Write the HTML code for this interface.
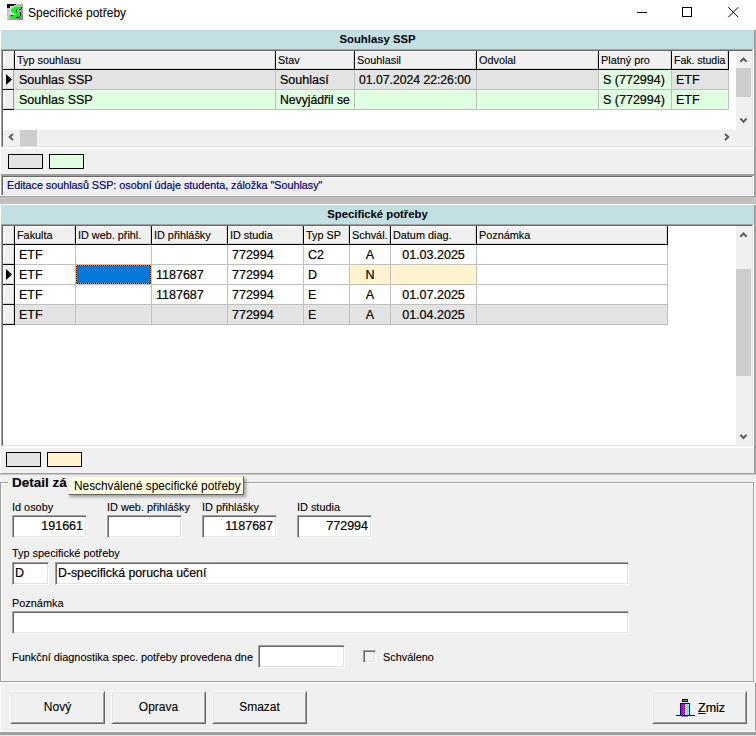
<!DOCTYPE html><html><head><meta charset="utf-8"><style>

html,body{margin:0;padding:0}
body{width:756px;height:736px;position:relative;overflow:hidden;background:#f0f0f0;font-family:"Liberation Sans", sans-serif;color:#000}
div{position:absolute;box-sizing:border-box}
.t{white-space:nowrap;line-height:1;-webkit-text-stroke:0.2px currentColor}
svg{position:absolute}
.edit{background:#fff;border:1px solid;border-color:#a0a0a0 #fff #fff #a0a0a0;box-shadow:inset 1px 1px #696969,inset -1px -1px #e3e3e3}
.btn{background:#f0f0f0;border:1px solid;border-color:#fff #696969 #696969 #fff;box-shadow:inset 1px 1px #e3e3e3,inset -1px -1px #a0a0a0}

</style></head><body>
<div style="left:0px;top:0px;width:756px;height:30px;background:#fff"></div>
<svg style="left:7px;top:4px" width="16" height="16" viewBox="0 0 16 16" shape-rendering="crispEdges"><defs><linearGradient id="ig" x1="0" y1="0" x2="1" y2="1"><stop offset="0" stop-color="#d4d4d4"/><stop offset="0.5" stop-color="#b0b0b0"/><stop offset="1" stop-color="#7c7c7c"/></linearGradient></defs><rect width="16" height="16" fill="url(#ig)"/><rect x="7" y="1" width="2" height="1" fill="#dcd0dc"/><rect x="3" y="2" width="4" height="1" fill="#dcd0dc"/><rect x="3" y="3" width="4" height="1" fill="#dcd0dc"/><rect x="3" y="4" width="2" height="1" fill="#dcd0dc"/><rect x="2" y="5" width="2" height="1" fill="#dcd0dc"/><rect x="2" y="6" width="2" height="1" fill="#dcd0dc"/><rect x="2" y="7" width="2" height="1" fill="#dcd0dc"/><rect x="1" y="8" width="5" height="1" fill="#dcd0dc"/><rect x="1" y="9" width="6" height="1" fill="#dcd0dc"/><rect x="1" y="10" width="8" height="1" fill="#dcd0dc"/><rect x="1" y="11" width="1" height="1" fill="#dcd0dc"/><rect x="0" y="12" width="2" height="1" fill="#dcd0dc"/><rect x="0" y="13" width="3" height="1" fill="#dcd0dc"/><rect x="0" y="14" width="2" height="1" fill="#dcd0dc"/><rect x="7" y="3" width="7" height="1" fill="#00ff00"/><rect x="5" y="4" width="9" height="1" fill="#00ff00"/><rect x="4" y="5" width="6" height="1" fill="#00ff00"/><rect x="4" y="6" width="5" height="1" fill="#00ff00"/><rect x="4" y="7" width="5" height="1" fill="#00ff00"/><rect x="6" y="8" width="7" height="1" fill="#00ff00"/><rect x="7" y="9" width="6" height="1" fill="#00ff00"/><rect x="9" y="10" width="4" height="1" fill="#00ff00"/><rect x="2" y="11" width="2" height="1" fill="#00ff00"/><rect x="6" y="11" width="7" height="1" fill="#00ff00"/><rect x="2" y="12" width="10" height="1" fill="#00ff00"/><rect x="3" y="13" width="6" height="1" fill="#00ff00"/><rect x="0" y="0" width="9" height="1" fill="#000"/><rect x="0" y="1" width="7" height="1" fill="#000"/><rect x="0" y="2" width="3" height="1" fill="#000"/><rect x="0" y="3" width="3" height="1" fill="#000"/><rect x="14" y="3" width="1" height="1" fill="#000"/><rect x="14" y="4" width="1" height="1" fill="#000"/><rect x="10" y="5" width="1" height="1" fill="#000"/><rect x="12" y="5" width="2" height="1" fill="#000"/><rect x="9" y="6" width="1" height="1" fill="#000"/><rect x="9" y="7" width="1" height="1" fill="#000"/><rect x="13" y="8" width="1" height="1" fill="#000"/><rect x="13" y="9" width="1" height="1" fill="#000"/><rect x="13" y="10" width="1" height="1" fill="#000"/><rect x="4" y="11" width="2" height="1" fill="#000"/><rect x="13" y="11" width="1" height="1" fill="#000"/><rect x="12" y="12" width="1" height="1" fill="#000"/><rect x="9" y="13" width="3" height="1" fill="#000"/></svg>
<div class="t" style="left:28px;top:7px;font-size:12px;-webkit-text-stroke:0.05px">Specifické potřeby</div>
<div style="left:637px;top:12px;width:10px;height:1px;background:#000"></div>
<div style="left:682px;top:7px;width:10px;height:10px;border:1px solid #000"></div>
<svg style="left:727px;top:6px" width="13" height="13" viewBox="0 0 13 13"><path d="M1.3 1.3L11.2 11.2M11.2 1.3L1.3 11.2" stroke="#000" stroke-width="1"/></svg>
<div style="left:0px;top:30px;width:1px;height:444px;background:#fff"></div>
<div style="left:754px;top:30px;width:2px;height:444px;background:#a0a0a0"></div>
<div style="left:1px;top:30px;width:753px;height:19px;background:#c2dfe1"></div>
<div class="t" style="left:0px;top:34px;width:755px;text-align:center;font-size:11.3px;font-weight:bold;-webkit-text-stroke:0">Souhlasy SSP</div>
<div style="left:3px;top:51px;width:749px;height:95px;background:#fff"></div>
<div style="left:1px;top:49px;width:753px;height:1px;background:#a0a0a0"></div>
<div style="left:1px;top:49px;width:1px;height:99px;background:#a0a0a0"></div>
<div style="left:1px;top:147px;width:753px;height:1px;background:#fff"></div>
<div style="left:753px;top:49px;width:1px;height:99px;background:#fff"></div>
<div style="left:2px;top:50px;width:751px;height:1px;background:#696969"></div>
<div style="left:2px;top:50px;width:1px;height:97px;background:#696969"></div>
<div style="left:2px;top:146px;width:751px;height:1px;background:#e3e3e3"></div>
<div style="left:752px;top:50px;width:1px;height:97px;background:#e3e3e3"></div>
<div style="left:3px;top:51px;width:11px;height:18px;background:#f0f0f0"></div>
<div style="left:3px;top:68px;width:11px;height:1px;background:#d8d8d8"></div>
<div style="left:13px;top:51px;width:1px;height:18px;background:#d8d8d8"></div>
<div style="left:3px;top:51px;width:10px;height:1px;background:#fff"></div>
<div style="left:3px;top:51px;width:1px;height:17px;background:#fff"></div>
<div style="left:14px;top:51px;width:1px;height:19px;background:#000"></div>
<div style="left:15px;top:51px;width:260px;height:18px;background:#f0f0f0"></div>
<div style="left:15px;top:68px;width:260px;height:1px;background:#d8d8d8"></div>
<div style="left:274px;top:51px;width:1px;height:18px;background:#d8d8d8"></div>
<div style="left:15px;top:51px;width:259px;height:1px;background:#fff"></div>
<div style="left:15px;top:51px;width:1px;height:17px;background:#fff"></div>
<div style="left:275px;top:51px;width:1px;height:19px;background:#000"></div>
<div class="t" style="left:17px;top:55px;font-size:10.85px;-webkit-text-stroke:0.12px">Typ souhlasu</div>
<div style="left:276px;top:51px;width:78px;height:18px;background:#f0f0f0"></div>
<div style="left:276px;top:68px;width:78px;height:1px;background:#d8d8d8"></div>
<div style="left:353px;top:51px;width:1px;height:18px;background:#d8d8d8"></div>
<div style="left:276px;top:51px;width:77px;height:1px;background:#fff"></div>
<div style="left:276px;top:51px;width:1px;height:17px;background:#fff"></div>
<div style="left:354px;top:51px;width:1px;height:19px;background:#000"></div>
<div class="t" style="left:278px;top:55px;font-size:10.85px;-webkit-text-stroke:0.12px">Stav</div>
<div style="left:355px;top:51px;width:121px;height:18px;background:#f0f0f0"></div>
<div style="left:355px;top:68px;width:121px;height:1px;background:#d8d8d8"></div>
<div style="left:475px;top:51px;width:1px;height:18px;background:#d8d8d8"></div>
<div style="left:355px;top:51px;width:120px;height:1px;background:#fff"></div>
<div style="left:355px;top:51px;width:1px;height:17px;background:#fff"></div>
<div style="left:476px;top:51px;width:1px;height:19px;background:#000"></div>
<div class="t" style="left:357px;top:55px;font-size:10.85px;-webkit-text-stroke:0.12px">Souhlasil</div>
<div style="left:477px;top:51px;width:121px;height:18px;background:#f0f0f0"></div>
<div style="left:477px;top:68px;width:121px;height:1px;background:#d8d8d8"></div>
<div style="left:597px;top:51px;width:1px;height:18px;background:#d8d8d8"></div>
<div style="left:477px;top:51px;width:120px;height:1px;background:#fff"></div>
<div style="left:477px;top:51px;width:1px;height:17px;background:#fff"></div>
<div style="left:598px;top:51px;width:1px;height:19px;background:#000"></div>
<div class="t" style="left:479px;top:55px;font-size:10.85px;-webkit-text-stroke:0.12px">Odvolal</div>
<div style="left:599px;top:51px;width:72px;height:18px;background:#f0f0f0"></div>
<div style="left:599px;top:68px;width:72px;height:1px;background:#d8d8d8"></div>
<div style="left:670px;top:51px;width:1px;height:18px;background:#d8d8d8"></div>
<div style="left:599px;top:51px;width:71px;height:1px;background:#fff"></div>
<div style="left:599px;top:51px;width:1px;height:17px;background:#fff"></div>
<div style="left:671px;top:51px;width:1px;height:19px;background:#000"></div>
<div class="t" style="left:601px;top:55px;font-size:10.85px;-webkit-text-stroke:0.12px">Platný pro</div>
<div style="left:672px;top:51px;width:56px;height:18px;background:#f0f0f0"></div>
<div style="left:672px;top:68px;width:56px;height:1px;background:#d8d8d8"></div>
<div style="left:727px;top:51px;width:1px;height:18px;background:#d8d8d8"></div>
<div style="left:672px;top:51px;width:55px;height:1px;background:#fff"></div>
<div style="left:672px;top:51px;width:1px;height:17px;background:#fff"></div>
<div style="left:728px;top:51px;width:1px;height:19px;background:#000"></div>
<div class="t" style="left:674px;top:55px;font-size:10.5px;-webkit-text-stroke:0.12px">Fak. studia</div>
<div style="left:3px;top:69px;width:726px;height:1px;background:#000"></div>
<div style="left:3px;top:70px;width:11px;height:19px;background:#f0f0f0"></div>
<div style="left:3px;top:88px;width:11px;height:1px;background:#d8d8d8"></div>
<div style="left:13px;top:70px;width:1px;height:19px;background:#d8d8d8"></div>
<div style="left:3px;top:70px;width:10px;height:1px;background:#fff"></div>
<div style="left:3px;top:70px;width:1px;height:18px;background:#fff"></div>
<div style="left:3px;top:89px;width:11px;height:1px;background:#000"></div>
<div style="left:13px;top:70px;width:1px;height:19px;background:#a0a0a0"></div>
<div style="left:14px;top:70px;width:1px;height:20px;background:#e3e3e3"></div>
<svg style="left:6px;top:74px" width="7" height="11" viewBox="0 0 7 11"><path d="M0 0L6 5.5L0 11Z" fill="#000"/></svg>
<div style="left:15px;top:70px;width:260px;height:19px;background:#e3e3e3"></div>
<div style="left:275px;top:70px;width:1px;height:20px;background:#c0c0c0"></div>
<div style="left:15px;top:89px;width:260px;height:1px;background:#c0c0c0"></div>
<div class="t" style="left:19px;top:74px;font-size:12.5px">Souhlas SSP</div>
<div style="left:276px;top:70px;width:78px;height:19px;background:#e3e3e3"></div>
<div style="left:354px;top:70px;width:1px;height:20px;background:#c0c0c0"></div>
<div style="left:276px;top:89px;width:78px;height:1px;background:#c0c0c0"></div>
<div class="t" style="left:280px;top:74px;font-size:12.5px">Souhlasí</div>
<div style="left:355px;top:70px;width:121px;height:19px;background:#e3e3e3"></div>
<div style="left:476px;top:70px;width:1px;height:20px;background:#c0c0c0"></div>
<div style="left:355px;top:89px;width:121px;height:1px;background:#c0c0c0"></div>
<div class="t" style="left:359px;top:74px;font-size:12.2px">01.07.2024 22:26:00</div>
<div style="left:477px;top:70px;width:121px;height:19px;background:#e3e3e3"></div>
<div style="left:598px;top:70px;width:1px;height:20px;background:#c0c0c0"></div>
<div style="left:477px;top:89px;width:121px;height:1px;background:#c0c0c0"></div>
<div style="left:599px;top:70px;width:72px;height:19px;background:#e0ffe0"></div>
<div style="left:671px;top:70px;width:1px;height:20px;background:#c0c0c0"></div>
<div style="left:599px;top:89px;width:72px;height:1px;background:#c0c0c0"></div>
<div class="t" style="left:603px;top:74px;font-size:12.5px">S (772994)</div>
<div style="left:672px;top:70px;width:56px;height:19px;background:#e3e3e3"></div>
<div style="left:728px;top:70px;width:1px;height:20px;background:#c0c0c0"></div>
<div style="left:672px;top:89px;width:56px;height:1px;background:#c0c0c0"></div>
<div class="t" style="left:676px;top:74px;font-size:12.5px">ETF</div>
<div style="left:3px;top:90px;width:11px;height:19px;background:#f0f0f0"></div>
<div style="left:3px;top:108px;width:11px;height:1px;background:#d8d8d8"></div>
<div style="left:13px;top:90px;width:1px;height:19px;background:#d8d8d8"></div>
<div style="left:3px;top:90px;width:10px;height:1px;background:#fff"></div>
<div style="left:3px;top:90px;width:1px;height:18px;background:#fff"></div>
<div style="left:3px;top:109px;width:11px;height:1px;background:#000"></div>
<div style="left:13px;top:90px;width:1px;height:19px;background:#a0a0a0"></div>
<div style="left:14px;top:90px;width:1px;height:20px;background:#e3e3e3"></div>
<div style="left:15px;top:90px;width:260px;height:19px;background:#e0ffe0"></div>
<div style="left:275px;top:90px;width:1px;height:20px;background:#c0c0c0"></div>
<div style="left:15px;top:109px;width:260px;height:1px;background:#c0c0c0"></div>
<div class="t" style="left:19px;top:94px;font-size:12.5px">Souhlas SSP</div>
<div style="left:276px;top:90px;width:78px;height:19px;background:#e0ffe0"></div>
<div style="left:354px;top:90px;width:1px;height:20px;background:#c0c0c0"></div>
<div style="left:276px;top:109px;width:78px;height:1px;background:#c0c0c0"></div>
<div class="t" style="left:280px;top:94px;font-size:12.2px">Nevyjádřil se</div>
<div style="left:355px;top:90px;width:121px;height:19px;background:#e0ffe0"></div>
<div style="left:476px;top:90px;width:1px;height:20px;background:#c0c0c0"></div>
<div style="left:355px;top:109px;width:121px;height:1px;background:#c0c0c0"></div>
<div style="left:477px;top:90px;width:121px;height:19px;background:#e0ffe0"></div>
<div style="left:598px;top:90px;width:1px;height:20px;background:#c0c0c0"></div>
<div style="left:477px;top:109px;width:121px;height:1px;background:#c0c0c0"></div>
<div style="left:599px;top:90px;width:72px;height:19px;background:#e0ffe0"></div>
<div style="left:671px;top:90px;width:1px;height:20px;background:#c0c0c0"></div>
<div style="left:599px;top:109px;width:72px;height:1px;background:#c0c0c0"></div>
<div class="t" style="left:603px;top:94px;font-size:12.5px">S (772994)</div>
<div style="left:672px;top:90px;width:56px;height:19px;background:#e0ffe0"></div>
<div style="left:728px;top:90px;width:1px;height:20px;background:#c0c0c0"></div>
<div style="left:672px;top:109px;width:56px;height:1px;background:#c0c0c0"></div>
<div class="t" style="left:676px;top:94px;font-size:12.5px">ETF</div>
<div style="left:736px;top:51px;width:16px;height:79px;background:#f0f0f0"></div>
<div style="left:736px;top:68px;width:15px;height:29px;background:#cdcdcd"></div>
<div style="left:3px;top:130px;width:749px;height:16px;background:#f0f0f0"></div>
<div style="left:20px;top:130px;width:17px;height:16px;background:#cdcdcd"></div>
<div style="left:1px;top:148px;width:752px;height:1px;background:#fff"></div>
<div style="left:8px;top:154px;width:35px;height:15px;background:#e3e3e3;border:1px solid #000"></div>
<div style="left:49px;top:154px;width:35px;height:15px;background:#e0ffe0;border:1px solid #000"></div>
<div style="left:1px;top:174px;width:755px;height:2px;background:#a0a0a0"></div>
<div style="left:2px;top:176px;width:751px;height:1px;background:#696969"></div>
<div style="left:1px;top:176px;width:1px;height:20px;background:#a0a0a0"></div>
<div style="left:2px;top:176px;width:1px;height:19px;background:#696969"></div>
<div style="left:3px;top:177px;width:749px;height:1px;background:#fff"></div>
<div style="left:3px;top:177px;width:1px;height:17px;background:#fff"></div>
<div style="left:3px;top:194px;width:750px;height:1px;background:#e3e3e3"></div>
<div style="left:752px;top:176px;width:1px;height:19px;background:#e3e3e3"></div>
<div style="left:1px;top:195px;width:753px;height:1px;background:#fff"></div>
<div style="left:753px;top:176px;width:1px;height:20px;background:#fff"></div>
<div class="t" style="left:7px;top:180px;font-size:10.75px;color:#000080">Editace souhlasů SSP: osobní údaje studenta, záložka "Souhlasy"</div>
<div style="left:0px;top:196px;width:756px;height:1px;background:#a0a0a0"></div>
<div style="left:0px;top:197px;width:756px;height:7px;background:#c0c0c0"></div>
<div style="left:0px;top:204px;width:756px;height:1px;background:#fff"></div>
<div style="left:1px;top:205px;width:753px;height:19px;background:#c2dfe1"></div>
<div class="t" style="left:0px;top:209px;width:755px;text-align:center;font-size:11.3px;font-weight:bold;-webkit-text-stroke:0">Specifické potřeby</div>
<div style="left:3px;top:226px;width:749px;height:219px;background:#fff"></div>
<div style="left:1px;top:224px;width:753px;height:1px;background:#a0a0a0"></div>
<div style="left:1px;top:224px;width:1px;height:223px;background:#a0a0a0"></div>
<div style="left:1px;top:446px;width:753px;height:1px;background:#fff"></div>
<div style="left:753px;top:224px;width:1px;height:223px;background:#fff"></div>
<div style="left:2px;top:225px;width:751px;height:1px;background:#696969"></div>
<div style="left:2px;top:225px;width:1px;height:221px;background:#696969"></div>
<div style="left:2px;top:445px;width:751px;height:1px;background:#e3e3e3"></div>
<div style="left:752px;top:225px;width:1px;height:221px;background:#e3e3e3"></div>
<div style="left:3px;top:226px;width:11px;height:18px;background:#f0f0f0"></div>
<div style="left:3px;top:243px;width:11px;height:1px;background:#d8d8d8"></div>
<div style="left:13px;top:226px;width:1px;height:18px;background:#d8d8d8"></div>
<div style="left:3px;top:226px;width:10px;height:1px;background:#fff"></div>
<div style="left:3px;top:226px;width:1px;height:17px;background:#fff"></div>
<div style="left:14px;top:226px;width:1px;height:19px;background:#000"></div>
<div style="left:15px;top:226px;width:60px;height:18px;background:#f0f0f0"></div>
<div style="left:15px;top:243px;width:60px;height:1px;background:#d8d8d8"></div>
<div style="left:74px;top:226px;width:1px;height:18px;background:#d8d8d8"></div>
<div style="left:15px;top:226px;width:59px;height:1px;background:#fff"></div>
<div style="left:15px;top:226px;width:1px;height:17px;background:#fff"></div>
<div style="left:75px;top:226px;width:1px;height:19px;background:#000"></div>
<div class="t" style="left:17px;top:230px;font-size:10.85px;-webkit-text-stroke:0.12px">Fakulta</div>
<div style="left:76px;top:226px;width:75px;height:18px;background:#f0f0f0"></div>
<div style="left:76px;top:243px;width:75px;height:1px;background:#d8d8d8"></div>
<div style="left:150px;top:226px;width:1px;height:18px;background:#d8d8d8"></div>
<div style="left:76px;top:226px;width:74px;height:1px;background:#fff"></div>
<div style="left:76px;top:226px;width:1px;height:17px;background:#fff"></div>
<div style="left:151px;top:226px;width:1px;height:19px;background:#000"></div>
<div class="t" style="left:78px;top:230px;font-size:10.85px;-webkit-text-stroke:0.12px">ID web. přihl.</div>
<div style="left:152px;top:226px;width:75px;height:18px;background:#f0f0f0"></div>
<div style="left:152px;top:243px;width:75px;height:1px;background:#d8d8d8"></div>
<div style="left:226px;top:226px;width:1px;height:18px;background:#d8d8d8"></div>
<div style="left:152px;top:226px;width:74px;height:1px;background:#fff"></div>
<div style="left:152px;top:226px;width:1px;height:17px;background:#fff"></div>
<div style="left:227px;top:226px;width:1px;height:19px;background:#000"></div>
<div class="t" style="left:154px;top:230px;font-size:10.85px;-webkit-text-stroke:0.12px">ID přihlášky</div>
<div style="left:228px;top:226px;width:75px;height:18px;background:#f0f0f0"></div>
<div style="left:228px;top:243px;width:75px;height:1px;background:#d8d8d8"></div>
<div style="left:302px;top:226px;width:1px;height:18px;background:#d8d8d8"></div>
<div style="left:228px;top:226px;width:74px;height:1px;background:#fff"></div>
<div style="left:228px;top:226px;width:1px;height:17px;background:#fff"></div>
<div style="left:303px;top:226px;width:1px;height:19px;background:#000"></div>
<div class="t" style="left:230px;top:230px;font-size:10.85px;-webkit-text-stroke:0.12px">ID studia</div>
<div style="left:304px;top:226px;width:45px;height:18px;background:#f0f0f0"></div>
<div style="left:304px;top:243px;width:45px;height:1px;background:#d8d8d8"></div>
<div style="left:348px;top:226px;width:1px;height:18px;background:#d8d8d8"></div>
<div style="left:304px;top:226px;width:44px;height:1px;background:#fff"></div>
<div style="left:304px;top:226px;width:1px;height:17px;background:#fff"></div>
<div style="left:349px;top:226px;width:1px;height:19px;background:#000"></div>
<div class="t" style="left:306px;top:230px;font-size:10.85px;-webkit-text-stroke:0.12px">Typ SP</div>
<div style="left:350px;top:226px;width:40px;height:18px;background:#f0f0f0"></div>
<div style="left:350px;top:243px;width:40px;height:1px;background:#d8d8d8"></div>
<div style="left:389px;top:226px;width:1px;height:18px;background:#d8d8d8"></div>
<div style="left:350px;top:226px;width:39px;height:1px;background:#fff"></div>
<div style="left:350px;top:226px;width:1px;height:17px;background:#fff"></div>
<div style="left:390px;top:226px;width:1px;height:19px;background:#000"></div>
<div class="t" style="left:352px;top:230px;font-size:10.85px;-webkit-text-stroke:0.12px">Schvál.</div>
<div style="left:391px;top:226px;width:85px;height:18px;background:#f0f0f0"></div>
<div style="left:391px;top:243px;width:85px;height:1px;background:#d8d8d8"></div>
<div style="left:475px;top:226px;width:1px;height:18px;background:#d8d8d8"></div>
<div style="left:391px;top:226px;width:84px;height:1px;background:#fff"></div>
<div style="left:391px;top:226px;width:1px;height:17px;background:#fff"></div>
<div style="left:476px;top:226px;width:1px;height:19px;background:#000"></div>
<div class="t" style="left:393px;top:230px;font-size:10.85px;-webkit-text-stroke:0.12px">Datum diag.</div>
<div style="left:477px;top:226px;width:190px;height:18px;background:#f0f0f0"></div>
<div style="left:477px;top:243px;width:190px;height:1px;background:#d8d8d8"></div>
<div style="left:666px;top:226px;width:1px;height:18px;background:#d8d8d8"></div>
<div style="left:477px;top:226px;width:189px;height:1px;background:#fff"></div>
<div style="left:477px;top:226px;width:1px;height:17px;background:#fff"></div>
<div style="left:667px;top:226px;width:1px;height:19px;background:#000"></div>
<div class="t" style="left:479px;top:230px;font-size:10.85px;-webkit-text-stroke:0.12px">Poznámka</div>
<div style="left:3px;top:244px;width:665px;height:1px;background:#000"></div>
<div style="left:3px;top:245px;width:11px;height:19px;background:#f0f0f0"></div>
<div style="left:3px;top:263px;width:11px;height:1px;background:#d8d8d8"></div>
<div style="left:13px;top:245px;width:1px;height:19px;background:#d8d8d8"></div>
<div style="left:3px;top:245px;width:10px;height:1px;background:#fff"></div>
<div style="left:3px;top:245px;width:1px;height:18px;background:#fff"></div>
<div style="left:3px;top:264px;width:11px;height:1px;background:#000"></div>
<div style="left:14px;top:245px;width:1px;height:20px;background:#000"></div>
<div style="left:15px;top:245px;width:60px;height:19px;background:#fff"></div>
<div style="left:75px;top:245px;width:1px;height:20px;background:#c0c0c0"></div>
<div style="left:15px;top:264px;width:60px;height:1px;background:#c0c0c0"></div>
<div class="t" style="left:19px;top:249px;font-size:12.5px">ETF</div>
<div style="left:76px;top:245px;width:75px;height:19px;background:#fff"></div>
<div style="left:151px;top:245px;width:1px;height:20px;background:#c0c0c0"></div>
<div style="left:76px;top:264px;width:75px;height:1px;background:#c0c0c0"></div>
<div style="left:152px;top:245px;width:75px;height:19px;background:#fff"></div>
<div style="left:227px;top:245px;width:1px;height:20px;background:#c0c0c0"></div>
<div style="left:152px;top:264px;width:75px;height:1px;background:#c0c0c0"></div>
<div style="left:228px;top:245px;width:75px;height:19px;background:#fff"></div>
<div style="left:303px;top:245px;width:1px;height:20px;background:#c0c0c0"></div>
<div style="left:228px;top:264px;width:75px;height:1px;background:#c0c0c0"></div>
<div class="t" style="left:232px;top:249px;font-size:12.5px">772994</div>
<div style="left:304px;top:245px;width:45px;height:19px;background:#fff"></div>
<div style="left:349px;top:245px;width:1px;height:20px;background:#c0c0c0"></div>
<div style="left:304px;top:264px;width:45px;height:1px;background:#c0c0c0"></div>
<div class="t" style="left:308px;top:249px;font-size:12.5px">C2</div>
<div style="left:350px;top:245px;width:40px;height:19px;background:#fff"></div>
<div style="left:390px;top:245px;width:1px;height:20px;background:#c0c0c0"></div>
<div style="left:350px;top:264px;width:40px;height:1px;background:#c0c0c0"></div>
<div class="t" style="left:350px;top:249px;font-size:12.5px;width:40px;text-align:center">A</div>
<div style="left:391px;top:245px;width:85px;height:19px;background:#fff"></div>
<div style="left:476px;top:245px;width:1px;height:20px;background:#c0c0c0"></div>
<div style="left:391px;top:264px;width:85px;height:1px;background:#c0c0c0"></div>
<div class="t" style="left:391px;top:249px;font-size:12.5px;width:85px;text-align:center">01.03.2025</div>
<div style="left:477px;top:245px;width:190px;height:19px;background:#fff"></div>
<div style="left:667px;top:245px;width:1px;height:20px;background:#c0c0c0"></div>
<div style="left:477px;top:264px;width:190px;height:1px;background:#c0c0c0"></div>
<div style="left:3px;top:265px;width:11px;height:19px;background:#f0f0f0"></div>
<div style="left:3px;top:283px;width:11px;height:1px;background:#d8d8d8"></div>
<div style="left:13px;top:265px;width:1px;height:19px;background:#d8d8d8"></div>
<div style="left:3px;top:265px;width:10px;height:1px;background:#fff"></div>
<div style="left:3px;top:265px;width:1px;height:18px;background:#fff"></div>
<div style="left:3px;top:284px;width:11px;height:1px;background:#000"></div>
<div style="left:14px;top:265px;width:1px;height:20px;background:#000"></div>
<svg style="left:6px;top:269px" width="7" height="11" viewBox="0 0 7 11"><path d="M0 0L6 5.5L0 11Z" fill="#000"/></svg>
<div style="left:15px;top:265px;width:60px;height:19px;background:#fff"></div>
<div style="left:75px;top:265px;width:1px;height:20px;background:#c0c0c0"></div>
<div style="left:15px;top:284px;width:60px;height:1px;background:#c0c0c0"></div>
<div class="t" style="left:19px;top:269px;font-size:12.5px">ETF</div>
<div style="left:76px;top:265px;width:75px;height:19px;background:#fff"></div>
<div style="left:151px;top:265px;width:1px;height:20px;background:#c0c0c0"></div>
<div style="left:76px;top:284px;width:75px;height:1px;background:#c0c0c0"></div>
<div style="left:76px;top:265px;width:75px;height:19px;background:#0078d7;box-shadow:inset 0 0 0 1px #000;outline:1px dotted #ff8c28;outline-offset:-1px"></div>
<div style="left:152px;top:265px;width:75px;height:19px;background:#fff"></div>
<div style="left:227px;top:265px;width:1px;height:20px;background:#c0c0c0"></div>
<div style="left:152px;top:284px;width:75px;height:1px;background:#c0c0c0"></div>
<div class="t" style="left:156px;top:269px;font-size:12.5px">1187687</div>
<div style="left:228px;top:265px;width:75px;height:19px;background:#fff"></div>
<div style="left:303px;top:265px;width:1px;height:20px;background:#c0c0c0"></div>
<div style="left:228px;top:284px;width:75px;height:1px;background:#c0c0c0"></div>
<div class="t" style="left:232px;top:269px;font-size:12.5px">772994</div>
<div style="left:304px;top:265px;width:45px;height:19px;background:#fff"></div>
<div style="left:349px;top:265px;width:1px;height:20px;background:#c0c0c0"></div>
<div style="left:304px;top:284px;width:45px;height:1px;background:#c0c0c0"></div>
<div class="t" style="left:308px;top:269px;font-size:12.5px">D</div>
<div style="left:350px;top:265px;width:40px;height:19px;background:#fff3d0"></div>
<div style="left:390px;top:265px;width:1px;height:20px;background:#c0c0c0"></div>
<div style="left:350px;top:284px;width:40px;height:1px;background:#c0c0c0"></div>
<div class="t" style="left:350px;top:269px;font-size:12.5px;width:40px;text-align:center">N</div>
<div style="left:391px;top:265px;width:85px;height:19px;background:#fff3d0"></div>
<div style="left:476px;top:265px;width:1px;height:20px;background:#c0c0c0"></div>
<div style="left:391px;top:284px;width:85px;height:1px;background:#c0c0c0"></div>
<div style="left:477px;top:265px;width:190px;height:19px;background:#fff"></div>
<div style="left:667px;top:265px;width:1px;height:20px;background:#c0c0c0"></div>
<div style="left:477px;top:284px;width:190px;height:1px;background:#c0c0c0"></div>
<div style="left:3px;top:285px;width:11px;height:19px;background:#f0f0f0"></div>
<div style="left:3px;top:303px;width:11px;height:1px;background:#d8d8d8"></div>
<div style="left:13px;top:285px;width:1px;height:19px;background:#d8d8d8"></div>
<div style="left:3px;top:285px;width:10px;height:1px;background:#fff"></div>
<div style="left:3px;top:285px;width:1px;height:18px;background:#fff"></div>
<div style="left:3px;top:304px;width:11px;height:1px;background:#000"></div>
<div style="left:14px;top:285px;width:1px;height:20px;background:#000"></div>
<div style="left:15px;top:285px;width:60px;height:19px;background:#fff"></div>
<div style="left:75px;top:285px;width:1px;height:20px;background:#c0c0c0"></div>
<div style="left:15px;top:304px;width:60px;height:1px;background:#c0c0c0"></div>
<div class="t" style="left:19px;top:289px;font-size:12.5px">ETF</div>
<div style="left:76px;top:285px;width:75px;height:19px;background:#fff"></div>
<div style="left:151px;top:285px;width:1px;height:20px;background:#c0c0c0"></div>
<div style="left:76px;top:304px;width:75px;height:1px;background:#c0c0c0"></div>
<div style="left:152px;top:285px;width:75px;height:19px;background:#fff"></div>
<div style="left:227px;top:285px;width:1px;height:20px;background:#c0c0c0"></div>
<div style="left:152px;top:304px;width:75px;height:1px;background:#c0c0c0"></div>
<div class="t" style="left:156px;top:289px;font-size:12.5px">1187687</div>
<div style="left:228px;top:285px;width:75px;height:19px;background:#fff"></div>
<div style="left:303px;top:285px;width:1px;height:20px;background:#c0c0c0"></div>
<div style="left:228px;top:304px;width:75px;height:1px;background:#c0c0c0"></div>
<div class="t" style="left:232px;top:289px;font-size:12.5px">772994</div>
<div style="left:304px;top:285px;width:45px;height:19px;background:#fff"></div>
<div style="left:349px;top:285px;width:1px;height:20px;background:#c0c0c0"></div>
<div style="left:304px;top:304px;width:45px;height:1px;background:#c0c0c0"></div>
<div class="t" style="left:308px;top:289px;font-size:12.5px">E</div>
<div style="left:350px;top:285px;width:40px;height:19px;background:#fff"></div>
<div style="left:390px;top:285px;width:1px;height:20px;background:#c0c0c0"></div>
<div style="left:350px;top:304px;width:40px;height:1px;background:#c0c0c0"></div>
<div class="t" style="left:350px;top:289px;font-size:12.5px;width:40px;text-align:center">A</div>
<div style="left:391px;top:285px;width:85px;height:19px;background:#fff"></div>
<div style="left:476px;top:285px;width:1px;height:20px;background:#c0c0c0"></div>
<div style="left:391px;top:304px;width:85px;height:1px;background:#c0c0c0"></div>
<div class="t" style="left:391px;top:289px;font-size:12.5px;width:85px;text-align:center">01.07.2025</div>
<div style="left:477px;top:285px;width:190px;height:19px;background:#fff"></div>
<div style="left:667px;top:285px;width:1px;height:20px;background:#c0c0c0"></div>
<div style="left:477px;top:304px;width:190px;height:1px;background:#c0c0c0"></div>
<div style="left:3px;top:305px;width:11px;height:19px;background:#f0f0f0"></div>
<div style="left:3px;top:323px;width:11px;height:1px;background:#d8d8d8"></div>
<div style="left:13px;top:305px;width:1px;height:19px;background:#d8d8d8"></div>
<div style="left:3px;top:305px;width:10px;height:1px;background:#fff"></div>
<div style="left:3px;top:305px;width:1px;height:18px;background:#fff"></div>
<div style="left:3px;top:324px;width:11px;height:1px;background:#000"></div>
<div style="left:14px;top:305px;width:1px;height:20px;background:#000"></div>
<div style="left:15px;top:305px;width:60px;height:19px;background:#e3e3e3"></div>
<div style="left:75px;top:305px;width:1px;height:20px;background:#c0c0c0"></div>
<div style="left:15px;top:324px;width:60px;height:1px;background:#c0c0c0"></div>
<div class="t" style="left:19px;top:309px;font-size:12.5px">ETF</div>
<div style="left:76px;top:305px;width:75px;height:19px;background:#e3e3e3"></div>
<div style="left:151px;top:305px;width:1px;height:20px;background:#c0c0c0"></div>
<div style="left:76px;top:324px;width:75px;height:1px;background:#c0c0c0"></div>
<div style="left:152px;top:305px;width:75px;height:19px;background:#e3e3e3"></div>
<div style="left:227px;top:305px;width:1px;height:20px;background:#c0c0c0"></div>
<div style="left:152px;top:324px;width:75px;height:1px;background:#c0c0c0"></div>
<div style="left:228px;top:305px;width:75px;height:19px;background:#e3e3e3"></div>
<div style="left:303px;top:305px;width:1px;height:20px;background:#c0c0c0"></div>
<div style="left:228px;top:324px;width:75px;height:1px;background:#c0c0c0"></div>
<div class="t" style="left:232px;top:309px;font-size:12.5px">772994</div>
<div style="left:304px;top:305px;width:45px;height:19px;background:#e3e3e3"></div>
<div style="left:349px;top:305px;width:1px;height:20px;background:#c0c0c0"></div>
<div style="left:304px;top:324px;width:45px;height:1px;background:#c0c0c0"></div>
<div class="t" style="left:308px;top:309px;font-size:12.5px">E</div>
<div style="left:350px;top:305px;width:40px;height:19px;background:#e3e3e3"></div>
<div style="left:390px;top:305px;width:1px;height:20px;background:#c0c0c0"></div>
<div style="left:350px;top:324px;width:40px;height:1px;background:#c0c0c0"></div>
<div class="t" style="left:350px;top:309px;font-size:12.5px;width:40px;text-align:center">A</div>
<div style="left:391px;top:305px;width:85px;height:19px;background:#e3e3e3"></div>
<div style="left:476px;top:305px;width:1px;height:20px;background:#c0c0c0"></div>
<div style="left:391px;top:324px;width:85px;height:1px;background:#c0c0c0"></div>
<div class="t" style="left:391px;top:309px;font-size:12.5px;width:85px;text-align:center">01.04.2025</div>
<div style="left:477px;top:305px;width:190px;height:19px;background:#e3e3e3"></div>
<div style="left:667px;top:305px;width:1px;height:20px;background:#c0c0c0"></div>
<div style="left:477px;top:324px;width:190px;height:1px;background:#c0c0c0"></div>
<div style="left:736px;top:226px;width:16px;height:219px;background:#f0f0f0"></div>
<div style="left:736px;top:269px;width:15px;height:107px;background:#cdcdcd"></div>
<div style="left:1px;top:447px;width:752px;height:1px;background:#fff"></div>
<div style="left:6px;top:452px;width:35px;height:15px;background:#e3e3e3;border:1px solid #000"></div>
<div style="left:47px;top:452px;width:35px;height:15px;background:#fff3d0;border:1px solid #000"></div>
<div style="left:0px;top:473px;width:756px;height:1px;background:#a0a0a0"></div>
<div style="left:0px;top:474px;width:756px;height:1px;background:#c8c8c8"></div>
<svg style="left:0;top:0" width="756" height="736"><path d="M740.4 61.8 L743.5 58.5 L746.6 61.8" stroke="#606060" stroke-width="2" fill="none"/><path d="M740.4 118.5 L743.5 121.8 L746.6 118.5" stroke="#606060" stroke-width="2" fill="none"/><path d="M13 133.9 L9.7 137 L13 140.1" stroke="#606060" stroke-width="2" fill="none"/><path d="M725 133.9 L728.3 137 L725 140.1" stroke="#606060" stroke-width="2" fill="none"/><path d="M740.4 236.8 L743.5 233.5 L746.6 236.8" stroke="#606060" stroke-width="2" fill="none"/><path d="M740.4 434.7 L743.5 438.0 L746.6 434.7" stroke="#606060" stroke-width="2" fill="none"/></svg>
<div style="left:0px;top:482px;width:754px;height:200px;border:1px solid #a0a0a0;box-shadow:inset 1px 1px #fff, 1px 1px #fff"></div>
<div style="left:8px;top:476px;width:63px;height:15px;background:#f0f0f0"></div>
<div class="t" style="left:12px;top:476px;font-size:13.5px;font-weight:bold;width:55px;overflow:hidden;-webkit-text-stroke:0.1px">Detail záznamu</div>
<div class="t" style="left:12px;top:502px;font-size:10.9px;-webkit-text-stroke:0.1px">Id osoby</div>
<div class="edit" style="left:12px;top:515px;width:75px;height:23px;"></div>
<div class="t" style="left:12px;top:520px;font-size:12.5px;width:71px;text-align:right">191661</div>
<div class="t" style="left:107px;top:502px;font-size:10.9px;-webkit-text-stroke:0.1px">ID web. přihlášky</div>
<div class="edit" style="left:107px;top:515px;width:75px;height:23px;"></div>
<div class="t" style="left:202px;top:502px;font-size:10.9px;-webkit-text-stroke:0.1px">ID přihlášky</div>
<div class="edit" style="left:202px;top:515px;width:75px;height:23px;"></div>
<div class="t" style="left:202px;top:520px;font-size:12.5px;width:71px;text-align:right">1187687</div>
<div class="t" style="left:297px;top:502px;font-size:10.9px;-webkit-text-stroke:0.1px">ID studia</div>
<div class="edit" style="left:297px;top:515px;width:75px;height:23px;"></div>
<div class="t" style="left:297px;top:520px;font-size:12.5px;width:71px;text-align:right">772994</div>
<div class="t" style="left:12px;top:548px;font-size:10.9px;-webkit-text-stroke:0.1px">Typ specifické potřeby</div>
<div class="edit" style="left:12px;top:562px;width:37px;height:23px;"></div>
<div class="t" style="left:15px;top:567px;font-size:12.5px">D</div>
<div class="edit" style="left:55px;top:562px;width:574px;height:23px;"></div>
<div class="t" style="left:58px;top:567px;font-size:12.3px">D-specifická porucha učení</div>
<div class="t" style="left:12px;top:598px;font-size:10.9px;-webkit-text-stroke:0.1px">Poznámka</div>
<div class="edit" style="left:12px;top:611px;width:617px;height:23px;"></div>
<div class="t" style="left:12px;top:652px;font-size:10.9px;-webkit-text-stroke:0.1px">Funkční diagnostika spec. potřeby provedena dne</div>
<div class="edit" style="left:258px;top:645px;width:87px;height:23px;"></div>
<div style="left:363px;top:650px;width:13px;height:13px;background:#f0f0f0;border:1px solid;border-color:#a0a0a0 #fff #fff #a0a0a0;box-shadow:inset 1px 1px #696969,inset -1px -1px #e3e3e3"></div>
<div class="t" style="left:383px;top:652px;font-size:10.9px;-webkit-text-stroke:0.1px">Schváleno</div>
<div style="left:68px;top:476px;width:176px;height:19px;background:#ffffe1;border:1px solid;border-color:#e8e8e8 #646464 #646464 #e8e8e8;box-shadow:2px 2px 3px rgba(0,0,0,0.35)"></div>
<div class="t" style="left:74px;top:481px;font-size:11.85px;-webkit-text-stroke:0.05px">Neschválené specifické potřeby</div>
<div class="btn" style="left:10px;top:691px;width:95px;height:33px;"></div>
<div class="t" style="left:10px;top:701px;font-size:12px;width:95px;text-align:center;-webkit-text-stroke:0.1px;">Nový</div>
<div class="btn" style="left:111px;top:691px;width:95px;height:33px;"></div>
<div class="t" style="left:111px;top:701px;font-size:12px;width:95px;text-align:center;-webkit-text-stroke:0.1px;">Oprava</div>
<div class="btn" style="left:212px;top:691px;width:95px;height:33px;"></div>
<div class="t" style="left:212px;top:701px;font-size:12px;width:95px;text-align:center;-webkit-text-stroke:0.1px;">Smazat</div>
<div class="btn" style="left:652px;top:691px;width:95px;height:33px;"></div>
<div class="t" style="left:698px;top:702px;font-size:12.5px"><u>Z</u>miz</div>
<svg style="left:676px;top:699px" width="19" height="19" viewBox="0 0 19 19" shape-rendering="crispEdges"><rect x="6" y="0" width="6" height="3" fill="#000"/><rect x="7" y="1" width="4" height="1" fill="#00e000"/><rect x="4" y="4" width="10" height="12" fill="#000080"/><rect x="5" y="5" width="1" height="1" fill="#ff00ff"/><rect x="6" y="5" width="1" height="1" fill="#7a007a"/><rect x="7" y="5" width="1" height="1" fill="#ff00ff"/><rect x="8" y="5" width="1" height="1" fill="#7a007a"/><rect x="9" y="5" width="1" height="1" fill="#00ffff"/><rect x="10" y="5" width="1" height="1" fill="#ffffff"/><rect x="11" y="5" width="1" height="1" fill="#00ffff"/><rect x="12" y="5" width="1" height="1" fill="#ffffff"/><rect x="5" y="6" width="1" height="1" fill="#7a007a"/><rect x="6" y="6" width="1" height="1" fill="#ff00ff"/><rect x="7" y="6" width="1" height="1" fill="#7a007a"/><rect x="8" y="6" width="1" height="1" fill="#ff00ff"/><rect x="9" y="6" width="1" height="1" fill="#ffffff"/><rect x="10" y="6" width="1" height="1" fill="#00ffff"/><rect x="11" y="6" width="1" height="1" fill="#ffffff"/><rect x="12" y="6" width="1" height="1" fill="#00ffff"/><rect x="5" y="7" width="1" height="1" fill="#ff00ff"/><rect x="6" y="7" width="1" height="1" fill="#7a007a"/><rect x="7" y="7" width="1" height="1" fill="#ff00ff"/><rect x="8" y="7" width="1" height="1" fill="#7a007a"/><rect x="9" y="7" width="1" height="1" fill="#00ffff"/><rect x="10" y="7" width="1" height="1" fill="#ffffff"/><rect x="11" y="7" width="1" height="1" fill="#00ffff"/><rect x="12" y="7" width="1" height="1" fill="#ffffff"/><rect x="5" y="8" width="1" height="1" fill="#7a007a"/><rect x="6" y="8" width="1" height="1" fill="#ff00ff"/><rect x="7" y="8" width="1" height="1" fill="#7a007a"/><rect x="8" y="8" width="1" height="1" fill="#ff00ff"/><rect x="9" y="8" width="1" height="1" fill="#ffffff"/><rect x="10" y="8" width="1" height="1" fill="#00ffff"/><rect x="11" y="8" width="1" height="1" fill="#ffffff"/><rect x="12" y="8" width="1" height="1" fill="#00ffff"/><rect x="5" y="9" width="1" height="1" fill="#ff00ff"/><rect x="6" y="9" width="1" height="1" fill="#7a007a"/><rect x="7" y="9" width="1" height="1" fill="#ff00ff"/><rect x="8" y="9" width="1" height="1" fill="#7a007a"/><rect x="9" y="9" width="1" height="1" fill="#00ffff"/><rect x="10" y="9" width="1" height="1" fill="#ffffff"/><rect x="11" y="9" width="1" height="1" fill="#00ffff"/><rect x="12" y="9" width="1" height="1" fill="#ffffff"/><rect x="5" y="10" width="1" height="1" fill="#7a007a"/><rect x="6" y="10" width="1" height="1" fill="#ff00ff"/><rect x="7" y="10" width="1" height="1" fill="#7a007a"/><rect x="8" y="10" width="1" height="1" fill="#ff00ff"/><rect x="9" y="10" width="1" height="1" fill="#ffffff"/><rect x="10" y="10" width="1" height="1" fill="#00ffff"/><rect x="11" y="10" width="1" height="1" fill="#ffffff"/><rect x="12" y="10" width="1" height="1" fill="#00ffff"/><rect x="5" y="11" width="1" height="1" fill="#ff00ff"/><rect x="6" y="11" width="1" height="1" fill="#7a007a"/><rect x="7" y="11" width="1" height="1" fill="#ff00ff"/><rect x="8" y="11" width="1" height="1" fill="#7a007a"/><rect x="9" y="11" width="1" height="1" fill="#00ffff"/><rect x="10" y="11" width="1" height="1" fill="#ffffff"/><rect x="11" y="11" width="1" height="1" fill="#00ffff"/><rect x="12" y="11" width="1" height="1" fill="#ffffff"/><rect x="5" y="12" width="1" height="1" fill="#7a007a"/><rect x="6" y="12" width="1" height="1" fill="#ff00ff"/><rect x="7" y="12" width="1" height="1" fill="#7a007a"/><rect x="8" y="12" width="1" height="1" fill="#ff00ff"/><rect x="9" y="12" width="1" height="1" fill="#ffffff"/><rect x="10" y="12" width="1" height="1" fill="#00ffff"/><rect x="11" y="12" width="1" height="1" fill="#ffffff"/><rect x="12" y="12" width="1" height="1" fill="#00ffff"/><rect x="5" y="13" width="1" height="1" fill="#ff00ff"/><rect x="6" y="13" width="1" height="1" fill="#7a007a"/><rect x="7" y="13" width="1" height="1" fill="#ff00ff"/><rect x="8" y="13" width="1" height="1" fill="#7a007a"/><rect x="9" y="13" width="1" height="1" fill="#00ffff"/><rect x="10" y="13" width="1" height="1" fill="#ffffff"/><rect x="11" y="13" width="1" height="1" fill="#00ffff"/><rect x="12" y="13" width="1" height="1" fill="#ffffff"/><rect x="5" y="14" width="1" height="1" fill="#7a007a"/><rect x="6" y="14" width="1" height="1" fill="#ff00ff"/><rect x="7" y="14" width="1" height="1" fill="#7a007a"/><rect x="8" y="14" width="1" height="1" fill="#ff00ff"/><rect x="9" y="14" width="1" height="1" fill="#ffffff"/><rect x="10" y="14" width="1" height="1" fill="#00ffff"/><rect x="11" y="14" width="1" height="1" fill="#ffffff"/><rect x="12" y="14" width="1" height="1" fill="#00ffff"/><rect x="5" y="15" width="1" height="1" fill="#ff00ff"/><rect x="6" y="15" width="1" height="1" fill="#7a007a"/><rect x="7" y="15" width="1" height="1" fill="#ff00ff"/><rect x="8" y="15" width="1" height="1" fill="#7a007a"/><rect x="9" y="15" width="1" height="1" fill="#00ffff"/><rect x="10" y="15" width="1" height="1" fill="#ffffff"/><rect x="11" y="15" width="1" height="1" fill="#00ffff"/><rect x="12" y="15" width="1" height="1" fill="#ffffff"/><rect x="0" y="16" width="19" height="1" fill="#000080"/><rect x="6" y="17" width="6" height="1" fill="#808080"/></svg>
<div style="left:0px;top:683px;width:1px;height:49px;background:#fff"></div>
<div style="left:755px;top:683px;width:1px;height:48px;background:#a0a0a0"></div>
<div style="left:0px;top:731px;width:756px;height:1px;background:#fafafa"></div>
<div style="left:0px;top:732px;width:756px;height:3px;background:#a0a0a0"></div>
<div style="left:0px;top:735px;width:756px;height:1px;background:#e6e6e6"></div>
</body></html>
